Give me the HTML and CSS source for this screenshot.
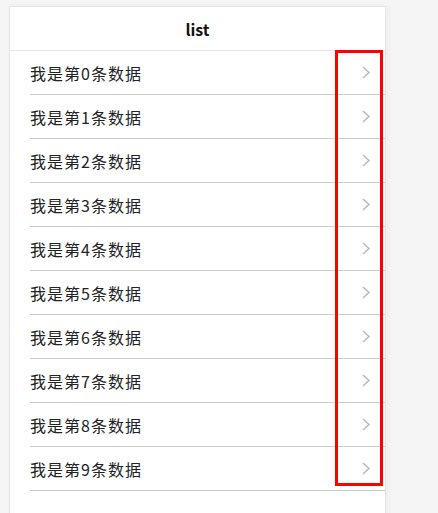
FILE: index.html
```html
<!DOCTYPE html>
<html lang="zh">
<head>
<meta charset="utf-8">
<title>list</title>
<link rel="stylesheet" href="styles.css">
</head>
<body>
<div class="page">
  <div class="card">
    <div class="header">list</div>
    <ul class="list">
      <li class="row"><span class="label">我是第0条数据</span><svg class="chev" width="8" height="13" viewBox="0 0 8 13"><path d="M1 1 L7 6.5 L1 12"/></svg></li>
      <li class="row"><span class="label">我是第1条数据</span><svg class="chev" width="8" height="13" viewBox="0 0 8 13"><path d="M1 1 L7 6.5 L1 12"/></svg></li>
      <li class="row"><span class="label">我是第2条数据</span><svg class="chev" width="8" height="13" viewBox="0 0 8 13"><path d="M1 1 L7 6.5 L1 12"/></svg></li>
      <li class="row"><span class="label">我是第3条数据</span><svg class="chev" width="8" height="13" viewBox="0 0 8 13"><path d="M1 1 L7 6.5 L1 12"/></svg></li>
      <li class="row"><span class="label">我是第4条数据</span><svg class="chev" width="8" height="13" viewBox="0 0 8 13"><path d="M1 1 L7 6.5 L1 12"/></svg></li>
      <li class="row"><span class="label">我是第5条数据</span><svg class="chev" width="8" height="13" viewBox="0 0 8 13"><path d="M1 1 L7 6.5 L1 12"/></svg></li>
      <li class="row"><span class="label">我是第6条数据</span><svg class="chev" width="8" height="13" viewBox="0 0 8 13"><path d="M1 1 L7 6.5 L1 12"/></svg></li>
      <li class="row"><span class="label">我是第7条数据</span><svg class="chev" width="8" height="13" viewBox="0 0 8 13"><path d="M1 1 L7 6.5 L1 12"/></svg></li>
      <li class="row"><span class="label">我是第8条数据</span><svg class="chev" width="8" height="13" viewBox="0 0 8 13"><path d="M1 1 L7 6.5 L1 12"/></svg></li>
      <li class="row"><span class="label">我是第9条数据</span><svg class="chev" width="8" height="13" viewBox="0 0 8 13"><path d="M1 1 L7 6.5 L1 12"/></svg></li>
    </ul>
    <div class="highlight"></div>
  </div>
</div>
</body>
</html>
```

FILE: styles.css
```css
html, body {
  margin: 0;
  padding: 0;
  height: 100%;
  overflow: hidden;
}

body {
  background: #f5f5f5;
  font-family: "Noto Sans CJK SC", "Noto Sans", sans-serif;
  color: #222;
}

.page {
  padding: 6px 0 0 9px;
}

.card {
  position: relative;
  box-sizing: border-box;
  width: 377px;
  min-height: 560px;
  background: #fff;
  border: 1px solid #e4e4e4;
  box-shadow: 2px 0 6px rgba(0, 0, 0, 0.04);
}

.header {
  height: 43px;
  border-bottom: 1px solid #e6e6e6;
  display: flex;
  align-items: center;
  justify-content: center;
  font-size: 16px;
  font-weight: 700;
  color: #111;
}

.list {
  list-style: none;
  margin: 0 0 0 20px;
  padding: 0;
}

.row {
  height: 43px;
  border-bottom: 1px solid #cccccc;
  display: flex;
  align-items: center;
  justify-content: space-between;
  padding-right: 15px;
}

.label {
  font-size: 16px;
  line-height: 1;
  letter-spacing: 1px;
  color: #222;
}

.chev path {
  fill: none;
  stroke: #b8b8b8;
  stroke-width: 1.5;
}

.highlight {
  position: absolute;
  left: 325px;
  top: 43px;
  width: 48px;
  height: 436px;
  box-sizing: border-box;
  border: 3px solid #ff0000;
}
```
